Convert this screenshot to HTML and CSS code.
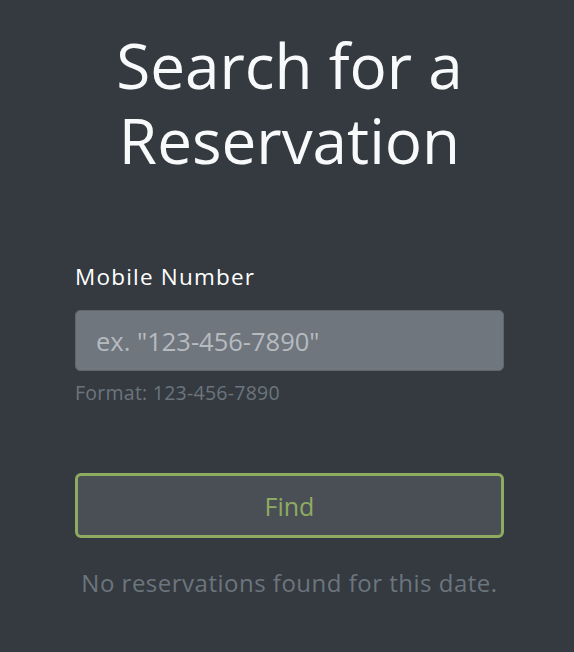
FILE: index.html
```html
<!DOCTYPE html>
<html lang="en">
<head>
<meta charset="utf-8">
<title>Search for a Reservation</title>
<link rel="stylesheet" href="styles.css">
</head>
<body>
<main class="page">
  <h1 class="title">Search for a Reservation</h1>
  <form class="search-form">
    <label class="field-label" for="mobile">Mobile Number</label>
    <input class="field-input" id="mobile" type="text" placeholder='ex. "123-456-7890"'>
    <small class="field-help">Format: 123-456-7890</small>
    <button class="find-btn" type="button">Find</button>
  </form>
  <p class="empty-msg">No reservations found for this date.</p>
</main>
</body>
</html>
```
FILE: styles.css
```css
html, body {
  margin: 0;
  padding: 0;
  background: #343a40;
}
body {
  font-family: "Open Sans", "Noto Sans", sans-serif;
  color: #f8f9fa;
}
.page {
  width: 429px;
  margin: 0 0 0 75px;
  padding-top: 28px;
  display: flex;
  flex-direction: column;
}
.title {
  margin: 0;
  font-size: 62px;
  font-weight: 400;
  line-height: 75px;
  text-align: center;
  color: #f8f9fa;
}
.search-form {
  display: flex;
  flex-direction: column;
  margin-top: 84px;
}
.field-label {
  font-size: 22.5px;
  letter-spacing: 1.2px;
  line-height: 30px;
  color: #ffffff;
}
.field-input {
  margin-top: 18px;
  height: 61px;
  box-sizing: border-box;
  background: #6f767e;
  border: 1px solid #5f666d;
  border-radius: 5px;
  padding: 0 20px;
  font-family: inherit;
  font-size: 25.5px;
  color: #f8f9fa;
  outline: none;
}
.field-input::placeholder {
  color: #b6bbc0;
  opacity: 1;
}
.field-help {
  margin-top: 9px;
  font-size: 19.5px;
  letter-spacing: 0.25px;
  line-height: 26px;
  color: #6c757d;
}
.find-btn {
  margin-top: 67px;
  height: 65px;
  box-sizing: border-box;
  background: #4a4f55;
  border: 3px solid #8eab62;
  border-radius: 6px;
  font-family: inherit;
  font-size: 25px;
  color: #8eab62;
}
.empty-msg {
  margin: 29px 0 0;
  text-align: center;
  font-size: 24px;
  letter-spacing: 0.5px;
  line-height: 32px;
  color: #6c757d;
}
```
